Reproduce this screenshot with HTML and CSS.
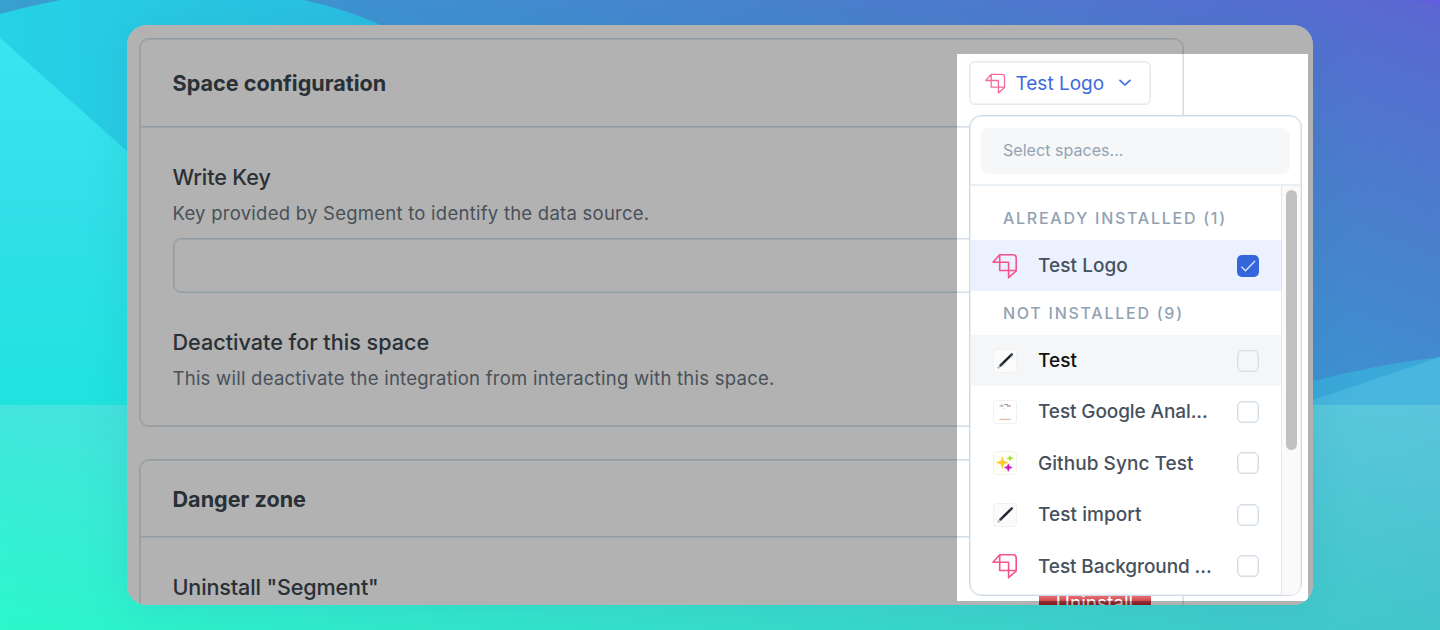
FILE: index.html
```html
<!DOCTYPE html>
<html lang="en">
<head>
<meta charset="utf-8">
<title>Space configuration</title>
<link rel="stylesheet" href="styles.css">
</head>
<body>
<svg class="backdrop" viewBox="0 0 1440 630" aria-hidden="true">
  <defs>
    <linearGradient id="sky" gradientUnits="userSpaceOnUse" x1="0" y1="10" x2="190" y2="-480"><stop offset="0" stop-color="#38a0cf"/><stop offset=".27" stop-color="#3f90d0"/><stop offset=".62" stop-color="#4b7dcd"/><stop offset=".9" stop-color="#566dd0"/><stop offset="1" stop-color="#5d66d3"/></linearGradient>
    <linearGradient id="arc" x1="0" y1="0" x2="1" y2="0"><stop offset="0" stop-color="#26d2e5"/><stop offset="1" stop-color="#2bbbe0"/></linearGradient>
    <linearGradient id="hill" x1="0" y1="0" x2="0" y2="1"><stop offset="0" stop-color="#37e6f0"/><stop offset=".5" stop-color="#30dfe8"/><stop offset="1" stop-color="#20e3de"/></linearGradient>
    <linearGradient id="seaTop" x1="0" y1="0" x2="1" y2="0"><stop offset="0" stop-color="#43e6de"/><stop offset="1" stop-color="#5cc5dc"/></linearGradient>
    <linearGradient id="seaLow" x1="0" y1="0" x2="1" y2="0"><stop offset="0" stop-color="#2bf7cb"/><stop offset="1" stop-color="#42c4ca"/></linearGradient>
    <linearGradient id="fade" x1="0" y1="0" x2="0" y2="1"><stop offset="0" stop-color="#000"/><stop offset="1" stop-color="#fff"/></linearGradient>
    <mask id="lower"><rect y="405" width="1440" height="225" fill="url(#fade)"/></mask>
    <filter id="soft" x="-10%" y="-10%" width="120%" height="120%"><feGaussianBlur stdDeviation="22"/></filter>
  </defs>
  <rect width="1440" height="630" fill="url(#sky)"/>
  <path d="M1415 0Q1430 4 1440 6V0Z" fill="#625ee0"/>
  <path d="M0 14Q30 6 60 0H304Q345 9 381 25V405H0Z" fill="url(#arc)"/>
  <path d="M0 38L127 151L413 405H0Z" fill="url(#hill)"/>
  <path d="M1200 405L1313 381Q1380 364 1440 357V405Z" fill="#3aa8d9"/>
  <path d="M1290 408L1313 400L1440 357V408Z" fill="#48b6df"/>
  <rect y="405" width="1440" height="225" fill="url(#seaTop)"/>
  <rect y="405" width="1440" height="225" fill="url(#seaLow)" mask="url(#lower)"/>
  <rect x="127" y="35" width="1186" height="570" rx="20" fill="#127a95" opacity=".16" filter="url(#soft)"/>
</svg>
<svg class="symbols" aria-hidden="true">
  <symbol id="logo" viewBox="0 0 26 26"><path d="M7.7 1.7H21a3.2 3.2 0 0 1 3.2 3.2V18l-7.6 6.7V9.3H1L7.7 1.7Zm0 0V17.5H24.2" fill="none" stroke="currentColor" stroke-width="1.6" stroke-linejoin="round"/></symbol>
  <symbol id="pen" viewBox="0 0 24 24"><rect x=".5" y=".5" width="23" height="23" rx="3" fill="#fbfbfb" stroke="#f1f1f1"/><path d="M7.5 16.5L18.8 5.3" stroke="#363c48" stroke-width="2.5" stroke-linecap="round"/><path d="M10 14l7-6.8" stroke="#171b26" stroke-width="1.2"/><path d="M4.7 19.3l2-2" stroke="#aab2b8" stroke-width="1.8"/></symbol>
  <symbol id="note" viewBox="0 0 24 24"><rect x=".5" y=".5" width="23" height="23" rx="3" fill="#fff" stroke="#f1f1f1"/><path d="M6.5 6h4M14 6h4" stroke="#bc8065" stroke-width="1.2"/><path d="M8.5 5l1-.6M11 4.5h2.5l2 1" stroke="#8ba3ad"/><path d="M10 8.6h1" stroke="#efb4b0"/><path d="M6.5 19.4h11" stroke="#e2bdab" stroke-width="1.3"/></symbol>
  <symbol id="sparks" viewBox="0 0 24 24"><rect x=".5" y=".5" width="23" height="23" rx="3" fill="#fffef8" stroke="#f2f2ec"/><path d="M9.3 5.7l1.5 4.4 4.4 1.5-4.4 1.5-1.5 4.4-1.5-4.4-4.4-1.5 4.4-1.5Z" fill="#ffc928" stroke="#ffc928" stroke-width=".4"/><path d="M17 4l1 2.3 2.9 1-2.9 1-1 2.3-1-2.3-2.9-1 2.9-1Z" fill="#9be22b"/><path d="M15.3 12.8l1.1 2.6 2.8 1.1-2.8 1.1-1.1 2.8-1.1-2.8-2.8-1.1 2.8-1.1Z" fill="#c717c4" stroke="#c717c4" stroke-width=".6"/></symbol>
</svg>
<main class="window">
  <section class="card config">
    <header class="card-head"><h2>Space configuration</h2></header>
    <div class="card-body">
      <h3 class="key">Write Key</h3>
      <p class="key-help">Key provided by Segment to identify the data source.</p>
      <div class="field"></div>
      <h3 class="off">Deactivate for this space</h3>
      <p class="off-help">This will deactivate the integration from interacting with this space.</p>
    </div>
  </section>
  <section class="card danger">
    <header class="card-head"><h2>Danger zone</h2></header>
    <div class="card-body row">
      <h3 class="un">Uninstall "Segment"</h3>
      <div class="uninstall">Uninstall</div>
    </div>
  </section>
  <div class="spotlight"></div>
  <div class="picker">
    <div class="trigger">
      <svg class="tlogo"><use href="#logo"/></svg>
      <span class="tname">Test Logo</span>
      <svg class="chev" viewBox="0 0 14 10"><path d="M2 2.3l5 4.7 5-4.7" fill="none" stroke="currentColor" stroke-width="1.7" stroke-linecap="round" stroke-linejoin="round"/></svg>
    </div>
    <div class="menu">
      <div class="search-wrap"><div class="search"><span>Select spaces...</span></div></div>
      <div class="scroll">
        <div class="list">
          <div class="group first"><span>ALREADY INSTALLED (1)</span></div>
          <div class="item chosen"><svg class="logo"><use href="#logo"/></svg><span class="name">Test Logo</span><svg class="box on" viewBox="0 0 22 22"><path d="M4.5 11.8l4 4L18 6" fill="none" stroke="#dce7ff" stroke-width="1.3"/></svg></div>
          <div class="group"><span>NOT INSTALLED (9)</span></div>
          <div class="item hover"><svg class="thumb"><use href="#pen"/></svg><span class="name">Test</span><i class="box"></i></div>
          <div class="item"><svg class="thumb"><use href="#note"/></svg><span class="name long">Test Google Anal...</span><i class="box"></i></div>
          <div class="item"><svg class="thumb"><use href="#sparks"/></svg><span class="name">Github Sync Test</span><i class="box"></i></div>
          <div class="item"><svg class="thumb"><use href="#pen"/></svg><span class="name">Test import</span><i class="box"></i></div>
          <div class="item"><svg class="logo"><use href="#logo"/></svg><span class="name long">Test Background ...</span><i class="box"></i></div>
        </div>
        <div class="bar"><div class="thumb-bar"></div></div>
      </div>
    </div>
  </div>
</main>
</body>
</html>
```

FILE: styles.css
```css
* { box-sizing: border-box; }
body {
  margin: 0;
  width: 1440px;
  height: 630px;
  overflow: hidden;
  padding: 25px 127px;
  font-family: Inter, "Liberation Sans", sans-serif;
}
h2, h3, p { margin: 0; white-space: nowrap; }
.backdrop { position: absolute; top: 0; left: 0; width: 1440px; height: 630px; z-index: -1; }
.symbols { position: absolute; width: 0; height: 0; }
.window {
  position: relative;
  width: 1186px;
  height: 580px;
  padding: 13px 12px;
  border-radius: 20px;
  overflow: hidden;
  background: #fff;
}
.card {
  width: 1045px;
  border: 1px solid #d6e0e9;
  border-radius: 10px;
  box-shadow: inset 0 0 0 1px #e3ebf1;
}
.config { height: 389px; }
.danger { height: 180px; margin-top: 32px; }
.card-head {
  height: 89px;
  padding-left: 32.5px;
  display: flex;
  align-items: center;
  border-bottom: 1px solid #e3ebf1;
  box-shadow: inset 0 -1px #d6e0e9;
}
.danger .card-head { height: 78px; }
h2 { font-size: 21.6px; line-height: 28px; font-weight: 700; color: #3b454e; }
h3 { font-size: 21.6px; line-height: 28px; font-weight: 500; color: #3b454e; }
.key { letter-spacing: -.12px; }
.un { letter-spacing: -.15px; }
p { font-size: 18.5px; line-height: 24px; color: #687581; letter-spacing: .25px; }
.card-body { padding: 35px 32.5px 0; }
.key-help { margin-top: 10px; }
.field {
  height: 55px;
  margin-top: 13px;
  border: 1px solid #d3dee8;
  border-radius: 8px;
  box-shadow: inset 0 0 0 1px #e9eff4;
}
.off { margin-top: 35px; }
.off-help { margin-top: 10px; }
.row { display: flex; justify-content: space-between; align-items: flex-start; }
.uninstall {
  width: 112px;
  height: 32px;
  background: linear-gradient(#e36a70 24px, #c02c35 31px);
  color: #fff;
  font-size: 19px;
  line-height: 61px;
  text-align: center;
}
.spotlight {
  position: absolute;
  left: 830px;
  top: 29px;
  width: 351px;
  height: 547px;
  box-shadow: 0 0 0 1200px rgba(0, 0, 0, .3);
}
.picker { position: absolute; left: 842px; top: 36px; width: 333px; }
.trigger {
  width: 182px;
  height: 44px;
  padding-left: 15px;
  display: flex;
  align-items: center;
  border: 1px solid #e2e9ef;
  box-shadow: inset 0 0 0 1px #f0f4f7;
  border-radius: 6px;
  background: #fff;
  color: #3b6bdc;
  font-size: 19px;
}
.tlogo { width: 21px; height: 21px; color: #f66c96; }
.tname { margin-left: 9.5px; white-space: nowrap; }
.chev { width: 14px; height: 10px; margin-left: 13.5px; }
.menu {
  height: 481px;
  margin-top: 10px;
  display: flex;
  flex-direction: column;
  overflow: hidden;
  border: 1px solid #cfdae5;
  border-radius: 12px;
  padding: 0 1px;
  background: #fff;
  box-shadow: inset 0 0 0 1px #e9eff4;
}
.search-wrap { height: 70px; padding: 12px 10px 0; border-bottom: 2px solid #eaeff3; flex: none; }
.search {
  height: 46px;
  padding: 0 0 2px 22px;
  display: flex;
  align-items: center;
  border-radius: 8px;
  background: #f5f7f9;
  color: #94a3b3;
  font-size: 16.1px;
}
.scroll { flex: 1; display: flex; min-height: 0; }
.list { width: 310px; flex: none; }
.group {
  height: 44px;
  padding: 0 0 1px 32px;
  display: flex;
  align-items: center;
  color: #92a2b2;
  font-size: 16px;
  font-weight: 500;
  letter-spacing: 1.74px;
  white-space: nowrap;
}
.group.first { height: 54px; padding-top: 10px; padding-bottom: 0; }
.item {
  height: 51.5px;
  padding: 0 22px 0 21px;
  display: flex;
  align-items: center;
  color: #46515d;
  font-size: 19px;
  font-weight: 500;
}
.chosen { height: 51px; background: #ebf1fe; }
.hover { height: 51px; background: #f5f6f8; color: #111; }
.logo { width: 26px; height: 26px; color: #f65389; }
.thumb { width: 24px; height: 24px; margin: 0 1px; }
.name { flex: 1; margin-left: 20px; white-space: nowrap; letter-spacing: .06px; }
.long { letter-spacing: -.1px; }
.box { width: 22px; height: 22px; flex: none; border: 1px solid #d5dee7; border-radius: 5px; box-shadow: inset 0 0 0 1px #e9eef3; }
.box.on { border: 0; background: #3567dc; box-shadow: none; }
.bar { flex: 1; padding: 4px 0 0 4px; border-left: 1px solid #e7e7e7; background: #fafafa; }
.thumb-bar { width: 11px; height: 260px; border-radius: 6px; background: #c1c1c1; }
```
